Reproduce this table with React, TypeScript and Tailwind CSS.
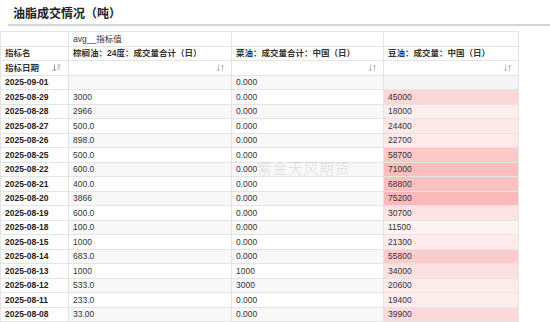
import type { ReactNode } from 'react'

type Row = {
  date: string
  palm: string
  rapeseed: string
  soy: number | null
}

const rows: Row[] = [
  { date: '2025-09-01', palm: '', rapeseed: '0.000', soy: null },
  { date: '2025-08-29', palm: '3000', rapeseed: '0.000', soy: 45000 },
  { date: '2025-08-28', palm: '2966', rapeseed: '0.000', soy: 18000 },
  { date: '2025-08-27', palm: '500.0', rapeseed: '0.000', soy: 24400 },
  { date: '2025-08-26', palm: '898.0', rapeseed: '0.000', soy: 22700 },
  { date: '2025-08-25', palm: '500.0', rapeseed: '0.000', soy: 58700 },
  { date: '2025-08-22', palm: '600.0', rapeseed: '0.000', soy: 71000 },
  { date: '2025-08-21', palm: '400.0', rapeseed: '0.000', soy: 68800 },
  { date: '2025-08-20', palm: '3866', rapeseed: '0.000', soy: 75200 },
  { date: '2025-08-19', palm: '600.0', rapeseed: '0.000', soy: 30700 },
  { date: '2025-08-18', palm: '100.0', rapeseed: '0.000', soy: 11500 },
  { date: '2025-08-15', palm: '1000', rapeseed: '0.000', soy: 21300 },
  { date: '2025-08-14', palm: '683.0', rapeseed: '0.000', soy: 55800 },
  { date: '2025-08-13', palm: '1000', rapeseed: '1000', soy: 34000 },
  { date: '2025-08-12', palm: '533.0', rapeseed: '3000', soy: 20600 },
  { date: '2025-08-11', palm: '233.0', rapeseed: '0.000', soy: 19400 },
  { date: '2025-08-08', palm: '33.00', rapeseed: '0.000', soy: 39900 },
]

const MAX_SOY = 75200

function heat(v: number) {
  const t = v / MAX_SOY
  const r = Math.round(255 - t * 4)
  const gb = Math.round(255 - t * 69)
  return `rgb(${r}, ${gb}, ${gb})`
}

function SortIcon({ active }: { active?: boolean }) {
  const color = active ? '#9a9a9a' : '#c4c4c4'
  return (
    <svg width="9" height="8" viewBox="0 0 9 8" aria-hidden>
      <path d="M2.5 0.5v6.5M0.8 5.2l1.7 1.8 1.7-1.8" stroke={color} strokeWidth="1" fill="none" />
      {active ? (
        <path d="M5.5 1h3M5.5 3h2.5M5.5 5h2" stroke={color} strokeWidth="1" fill="none" />
      ) : (
        <path d="M6.5 7.5V1M4.8 2.8l1.7-1.8 1.7 1.8" stroke={color} strokeWidth="1" fill="none" />
      )}
    </svg>
  )
}

function Cell({
  children,
  className = '',
}: {
  children?: ReactNode
  className?: string
}) {
  return (
    <td className={`h-[14.5px] border border-[#e4e4e4] px-[4px] py-0 leading-none ${className}`}>
      {children}
    </td>
  )
}

export default function App() {
  return (
    <div
      className="relative h-[322px] w-[550px] overflow-hidden bg-white text-[#333]"
      style={{ fontFamily: '"Liberation Sans", "Noto Sans CJK SC", sans-serif' }}
    >
      <div className="ml-[8px] flex h-[26px] items-end border-b-[2px] border-[#d6d6d6] pb-[4px] pl-[5px]">
        <h1 className="text-[12px] font-bold leading-none text-[#222]">油脂成交情况（吨）</h1>
      </div>

      <table className="mt-[5px] w-[518px] table-fixed border-collapse text-[8.5px]">
        <colgroup>
          <col className="w-[68px]" />
          <col className="w-[163px]" />
          <col className="w-[152px]" />
          <col className="w-[135px]" />
        </colgroup>
        <thead>
          <tr>
            <Cell />
            <Cell className="" >avg__指标值</Cell>
            <Cell />
            <Cell />
          </tr>
          <tr className="font-bold">
            <Cell>指标名</Cell>
            <Cell>棕榈油：24度：成交量合计（日）</Cell>
            <Cell>菜油：成交量合计：中国（日）</Cell>
            <Cell>豆油：成交量：中国（日）</Cell>
          </tr>
          <tr>
            <Cell className="font-bold">
              <div className="flex items-center justify-between pr-[3px]">
                <span>指标日期</span>
                <SortIcon active />
              </div>
            </Cell>
            <Cell>
              <div className="flex justify-end pr-[2px]">
                <SortIcon />
              </div>
            </Cell>
            <Cell>
              <div className="flex justify-end pr-[2px]">
                <SortIcon />
              </div>
            </Cell>
            <Cell>
              <div className="flex justify-end pr-[2px]">
                <SortIcon />
              </div>
            </Cell>
          </tr>
        </thead>
        <tbody>
          {rows.map((row, i) => {
            const stripe = i % 2 === 0 ? 'bg-[#f8f8f8]' : 'bg-white'
            return (
              <tr key={row.date}>
                <Cell className="bg-white font-bold text-[#222]">{row.date}</Cell>
                <Cell className={stripe}>{row.palm}</Cell>
                <Cell className={stripe}>{row.rapeseed}</Cell>
                {row.soy === null ? (
                  <Cell className="bg-[#f5f5f5]" />
                ) : (
                  <td
                    className="h-[14.5px] border border-[#e4e4e4] px-[4px] py-0 leading-none"
                    style={{ backgroundColor: heat(row.soy) }}
                  >
                    {row.soy}
                  </td>
                )}
              </tr>
            )
          })}
        </tbody>
      </table>

      <div className="pointer-events-none absolute left-[257px] top-[161px] text-[15px] leading-none tracking-[0.5px] text-[#000]/10">
        紫金天风期货
      </div>
    </div>
  )
}
